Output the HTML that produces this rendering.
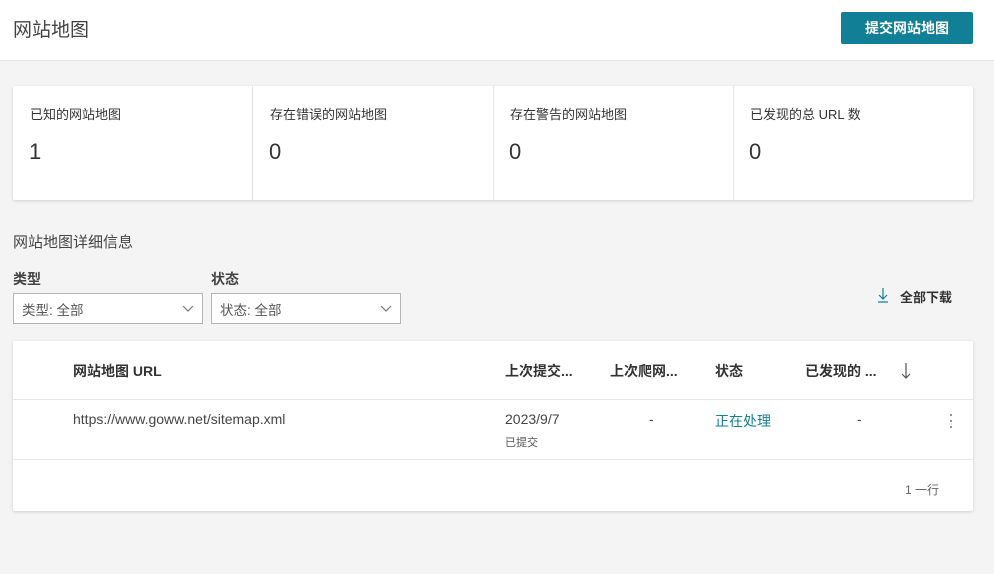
<!DOCTYPE html>
<html><head><meta charset="utf-8"><style>
*{margin:0;padding:0;box-sizing:border-box}
body{width:994px;height:574px;background:#f4f4f4;font-family:"Liberation Sans","Noto Sans CJK SC",sans-serif;color:#333;position:relative;overflow:hidden}
.a{position:absolute;white-space:nowrap}
.hdr{position:absolute;left:0;top:0;width:994px;height:61px;background:#fff;border-bottom:1px solid #e3e3e3}
.btn{position:absolute;left:841px;top:12px;width:132px;height:32px;background:#117f96;color:#fff;font-size:14px;font-weight:bold;text-align:center;line-height:32px;border-radius:2px}
.card{position:absolute;background:#fff;box-shadow:0 1px 3px rgba(0,0,0,.15);border-radius:2px}
.col{position:absolute;top:0;height:114px;border-right:1px solid #e6e6e6}
.lbl{font-size:13px;color:#333}
.num{font-size:22px;color:#333}
.sel{position:absolute;height:31px;width:190px;top:293px;background:#fff;border:1px solid #b5b5b5;font-size:13.5px;color:#555;padding:5px 8px}
.sel svg{position:absolute;right:8px;top:11px}
.th{font-size:14px;font-weight:bold;color:#333}
</style></head><body>
<div class="hdr"></div>
<div class="a" style="left:13px;top:15px;font-size:19px;color:#444">网站地图</div>
<div class="btn">提交网站地图</div>

<div class="card" style="left:13px;top:86px;width:960px;height:114px">
 <div class="col" style="left:0;width:240px"></div>
 <div class="col" style="left:240px;width:241px"></div>
 <div class="col" style="left:481px;width:240px"></div>
</div>
<div class="a lbl" style="left:30px;top:104px">已知的网站地图</div>
<div class="a lbl" style="left:270px;top:104px">存在错误的网站地图</div>
<div class="a lbl" style="left:510px;top:104px">存在警告的网站地图</div>
<div class="a lbl" style="left:750px;top:104px">已发现的总 URL 数</div>
<div class="a num" style="left:29px;top:139px">1</div>
<div class="a num" style="left:269px;top:139px">0</div>
<div class="a num" style="left:509px;top:139px">0</div>
<div class="a num" style="left:749px;top:139px">0</div>

<div class="a" style="left:13px;top:231px;font-size:15px;color:#444">网站地图详细信息</div>
<div class="a" style="left:13px;top:269px;font-size:14px;font-weight:bold;color:#444">类型</div>
<div class="a" style="left:211px;top:269px;font-size:14px;font-weight:bold;color:#444">状态</div>
<div class="sel" style="left:13px">类型: 全部<svg width="12" height="8"><path d="M1 1l5 5 5-5" fill="none" stroke="#777" stroke-width="1.2"/></svg></div>
<div class="sel" style="left:211px">状态: 全部<svg width="12" height="8"><path d="M1 1l5 5 5-5" fill="none" stroke="#777" stroke-width="1.2"/></svg></div>
<svg class="a" style="left:877px;top:287px" width="12" height="16"><path d="M6 1v11M2 8l4 4 4-4M1 15h10" fill="none" stroke="#117f96" stroke-width="1.2"/></svg>
<div class="a" style="left:900px;top:287px;font-size:13px;font-weight:bold;color:#333">全部下载</div>

<div class="card" style="left:13px;top:341px;width:960px;height:170px">
 <div style="position:absolute;left:0;top:58px;width:960px;border-top:1px solid #e8e8e8"></div>
 <div style="position:absolute;left:0;top:118px;width:960px;border-top:1px solid #e8e8e8"></div>
</div>
<div class="a th" style="left:73px;top:361px">网站地图 URL</div>
<div class="a th" style="left:505px;top:361px">上次提交...</div>
<div class="a th" style="left:610px;top:361px">上次爬网...</div>
<div class="a th" style="left:715px;top:361px">状态</div>
<div class="a th" style="left:805px;top:361px">已发现的 ...</div>
<svg class="a" style="left:901px;top:362px" width="10" height="18"><path d="M5 1v15M1 12l4 4 4-4" fill="none" stroke="#555" stroke-width="1.2"/></svg>
<div class="a" style="left:73px;top:411px;font-size:14px;color:#444">https://www.goww.net/sitemap.xml</div>
<div class="a" style="left:505px;top:411px;font-size:14px;color:#444">2023/9/7</div>
<div class="a" style="left:505px;top:434px;font-size:11px;color:#555">已提交</div>
<div class="a" style="left:649px;top:411px;font-size:14px;color:#444">-</div>
<div class="a" style="left:715px;top:411px;font-size:14px;color:#117f96">正在处理</div>
<div class="a" style="left:857px;top:411px;font-size:14px;color:#444">-</div>
<svg class="a" style="left:949px;top:413px" width="4" height="16"><circle cx="2" cy="2" r="1.1" fill="#888"/><circle cx="2" cy="8" r="1.1" fill="#888"/><circle cx="2" cy="14" r="1.1" fill="#888"/></svg>
<div class="a" style="left:905px;top:481px;font-size:12px;color:#666">1 一行</div>
</body></html>
